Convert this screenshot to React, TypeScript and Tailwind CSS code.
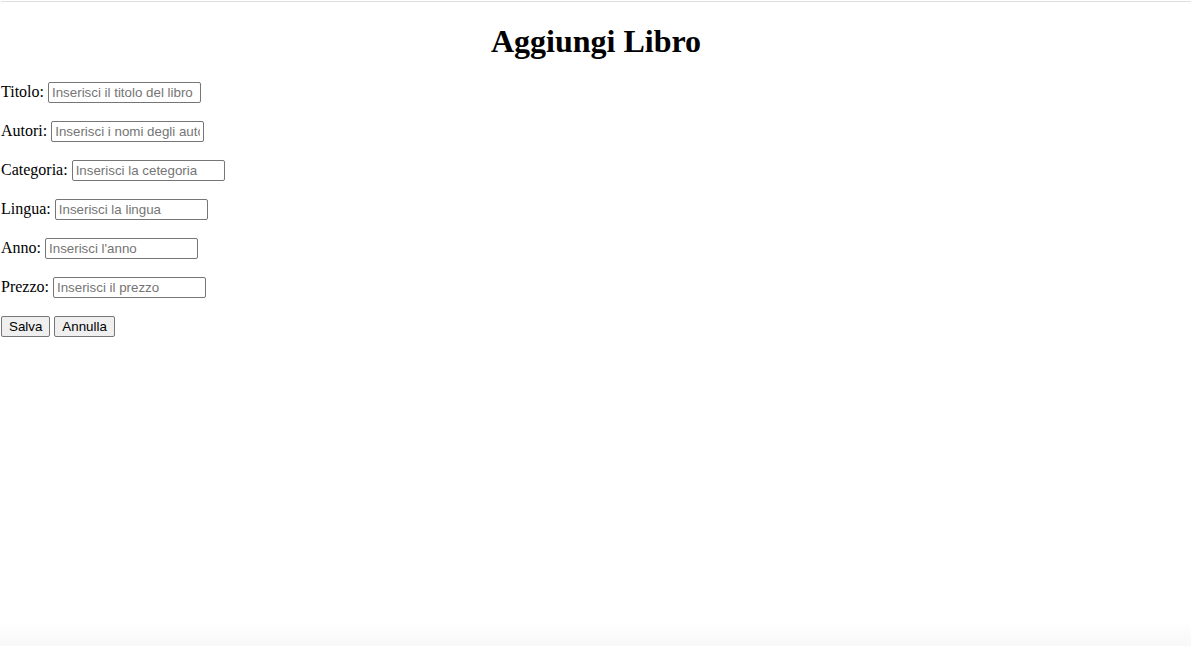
const campi = [
  { label: 'Titolo', placeholder: 'Inserisci il titolo del libro' },
  { label: 'Autori', placeholder: 'Inserisci i nomi degli autori' },
  { label: 'Categoria', placeholder: 'Inserisci la cetegoria' },
  { label: 'Lingua', placeholder: 'Inserisci la lingua' },
  { label: 'Anno', placeholder: "Inserisci l'anno" },
  { label: 'Prezzo', placeholder: 'Inserisci il prezzo' },
]

const App = () => {
  return (
    <div className="h-[646px] overflow-hidden bg-linear-to-b from-white from-[96%] to-[#f8f8f8] pl-px font-['Liberation_Serif',serif] text-[16px] leading-[normal] text-black">
      <div className="mt-px h-px bg-[#dedede]" />
      <h1 className="mt-[21.44px] mb-[20.44px] text-center text-[32px] font-bold">Aggiungi Libro</h1>

      <form onSubmit={(e) => e.preventDefault()}>
        {campi.map((c) => (
          <p key={c.label} className="my-4">
            <label>{c.label}:</label>{' '}
            <input
              type="text"
              placeholder={c.placeholder}
              className="my-px h-[21px] w-[153px] rounded-[2px] border border-[#767676] bg-white px-[3px] py-px font-['Liberation_Sans',Arial,sans-serif] text-[13.33px] placeholder:text-[#757575]"
            />
          </p>
        ))}

        <p className="my-4">
          <button
            type="submit"
            className="my-px h-[21px] rounded-[2px] border border-[#767676] bg-[#efefef] px-[7px] font-['Liberation_Sans',Arial,sans-serif] text-[13.33px]"
          >
            Salva
          </button>{' '}
          <button
            type="button"
            className="my-px h-[21px] rounded-[2px] border border-[#767676] bg-[#efefef] px-[7px] font-['Liberation_Sans',Arial,sans-serif] text-[13.33px]"
          >
            Annulla
          </button>
        </p>
      </form>
    </div>
  )
}

export default App
